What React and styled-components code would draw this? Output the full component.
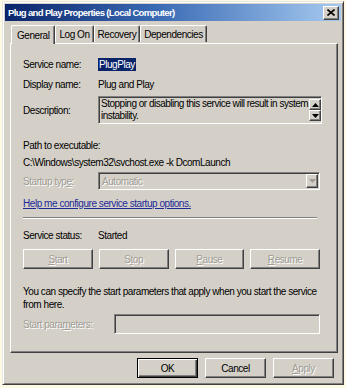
import React from "react";
import styled, { createGlobalStyle } from "styled-components";

const GlobalStyle = createGlobalStyle`
  html, body {
    margin: 0;
    padding: 0;
    background: #fdf9e4;
  }
  body {
    font-family: "Liberation Sans", Arial, sans-serif;
    font-size: 10px;
    letter-spacing: -0.45px;
    color: #000;
  }
`;

const Window = styled.div`
  box-sizing: border-box;
  width: 342px;
  height: 384px;
  margin: 1px 0 0 2px;
  background: #d4d0c8;
  border: 1px solid;
  border-color: #e8e6e0 #404040 #404040 #e8e6e0;
  box-shadow: inset 1px 1px 0 #fff, inset -1px -1px 0 #808080;
  padding: 2px;
  display: flex;
  flex-direction: column;
`;

const TitleBar = styled.div`
  height: 17px;
  display: flex;
  align-items: center;
  justify-content: space-between;
  padding: 0 2px 0 3px;
  background: linear-gradient(to right, #0a246a 0%, #3a6ab4 45%, #a6caf0 100%);
`;

const Title = styled.span`
  color: #fff;
  font-weight: bold;
  font-size: 9.5px;
  letter-spacing: -0.65px;
`;

const CloseButton = styled.div`
  box-sizing: border-box;
  width: 16px;
  height: 14px;
  background: #d4d0c8;
  border: 1px solid;
  border-color: #fff #404040 #404040 #fff;
  box-shadow: inset -1px -1px 0 #808080;
  display: flex;
  align-items: center;
  justify-content: center;
`;

const Body = styled.div`
  flex: 1;
  display: flex;
  flex-direction: column;
  padding: 3px 5px 0 5px;
`;

const TabRow = styled.div`
  display: flex;
  align-items: flex-end;
  height: 19px;
  padding-left: 1px;
  position: relative;
  z-index: 1;
`;

const Tab = styled.div`
  box-sizing: border-box;
  height: ${({ active }) => (active ? "19px" : "17px")};
  padding: 0 ${({ active }) => (active ? "5px" : "3px")};
  margin: ${({ active }) => (active ? "0 0 -1px" : "0 0 1px")};
  display: flex;
  align-items: center;
  background: #d4d0c8;
  border-top: 1px solid #fff;
  border-left: 1px solid #fff;
  border-right: 1px solid #404040;
  box-shadow: inset -1px 0 0 #808080;
  border-radius: 2px 2px 0 0;
`;

const Panel = styled.div`
  box-sizing: border-box;
  width: 328px;
  height: 310px;
  border: 1px solid;
  border-color: #fff #404040 #404040 #fff;
  box-shadow: inset -1px -1px 0 #808080;
  padding: 7px 17px 0 12px;
  display: flex;
  flex-direction: column;
`;

const Row = styled.div`
  display: flex;
  align-items: ${({ top }) => (top ? "flex-start" : "center")};
  min-height: ${({ h }) => h || 14}px;
  margin-top: ${({ mt }) => mt || 0}px;
`;

const Label = styled.div`
  width: ${({ w }) => w || 75}px;
  flex-shrink: 0;
  color: ${({ disabled }) => (disabled ? "#a09c94" : "#000")};
  text-shadow: ${({ disabled }) => (disabled ? "1px 1px 0 #fff" : "none")};
  padding-top: ${({ pt }) => pt || 0}px;
`;

const Selected = styled.span`
  background: #0a246a;
  color: #fff;
  padding: 1px 1px;
  outline: 1px dotted #d4d0c8;
`;

const Sunken = styled.div`
  box-sizing: border-box;
  width: ${({ w }) => w}px;
  height: ${({ h }) => h}px;
  border: 1px solid;
  border-color: #808080 #fff #fff #808080;
  box-shadow: inset 1px 1px 0 #404040, inset -1px -1px 0 #d4d0c8;
  background: #d4d0c8;
  display: flex;
`;

const DescText = styled.div`
  flex: 1;
  padding: 1px 1px 1px 2px;
  line-height: 12px;
  letter-spacing: -0.5px;
  white-space: nowrap;
`;

const ComboText = styled.div`
  flex: 1;
  padding: 0 3px;
  display: flex;
  align-items: center;
  color: #a09c94;
  text-shadow: 1px 1px 0 #fff;
`;

const ScrollCol = styled.div`
  display: flex;
  flex-direction: column;
  justify-content: space-between;
  padding: 2px 1px 2px 0;
`;

const ArrowBtn = styled.div`
  box-sizing: border-box;
  width: 12px;
  height: ${({ h }) => h || 12}px;
  background: #d4d0c8;
  border: 1px solid;
  border-color: #fff #404040 #404040 #fff;
  box-shadow: inset -1px -1px 0 #808080;
  display: flex;
  align-items: center;
  justify-content: center;
  margin: ${({ m }) => m || 0};
`;

const Tri = ({ up, color = "#000" }) => (
  <svg width="7" height="4" viewBox="0 0 7 4">
    <polygon points={up ? "3.5,0 7,4 0,4" : "0,0 7,0 3.5,4"} fill={color} />
  </svg>
);

const Text = styled.div`
  margin-top: ${({ mt }) => mt || 0}px;
  line-height: ${({ lh }) => lh || 14}px;
  white-space: nowrap;
`;

const Link = styled.a`
  color: #1c2a96;
  text-decoration: underline;
  cursor: pointer;
  margin-top: ${({ mt }) => mt || 0}px;
  line-height: 14px;
`;

const Separator = styled.div`
  height: 0;
  width: 294px;
  border-top: 1px solid #808080;
  border-bottom: 1px solid #fff;
  margin-top: 6px;
`;

const ButtonGrid = styled.div`
  display: grid;
  grid-template-columns: repeat(4, 1fr);
  gap: 6px;
  width: 297px;
  margin-top: 7px;
`;

const Button = styled.div`
  box-sizing: border-box;
  height: 20px;
  width: ${({ w }) => (w ? `${w}px` : "auto")};
  display: flex;
  align-items: center;
  justify-content: center;
  background: #d4d0c8;
  border: 1px solid;
  border-color: ${({ def }) =>
    def ? "#000" : "#fff #404040 #404040 #fff"};
  box-shadow: ${({ def }) =>
    def
      ? "inset 1px 1px 0 #fff, inset -1px -1px 0 #404040, inset -2px -2px 0 #808080"
      : "inset -1px -1px 0 #808080"};
  color: ${({ disabled }) => (disabled ? "#a09c94" : "#000")};
  text-shadow: ${({ disabled }) => (disabled ? "1px 1px 0 #fff" : "none")};
`;

const U = styled.span`
  text-decoration: underline;
`;

const Footer = styled.div`
  display: flex;
  justify-content: flex-end;
  gap: 7px;
  padding-right: 2px;
  margin-top: 5px;
`;

export default function App() {
  return (
    <>
      <GlobalStyle />
      <Window>
        <TitleBar>
          <Title>Plug and Play Properties (Local Computer)</Title>
          <CloseButton>
            <svg width="8" height="7" viewBox="0 0 8 7">
              <path d="M0.5 0.5 L7.5 6.5 M7.5 0.5 L0.5 6.5" stroke="#000" strokeWidth="1.6" />
            </svg>
          </CloseButton>
        </TitleBar>
        <Body>
          <TabRow>
            <Tab active>General</Tab>
            <Tab>Log On</Tab>
            <Tab>Recovery</Tab>
            <Tab>Dependencies</Tab>
          </TabRow>
          <Panel>
            <Row h={14} mt={6}>
              <Label>Service name:</Label>
              <Selected>PlugPlay</Selected>
            </Row>
            <Row h={14} mt={6}>
              <Label>Display name:</Label>
              <span>Plug and Play</span>
            </Row>
            <Row top mt={5}>
              <Label pt={9}>Description:</Label>
              <Sunken w={224} h={28}>
                <DescText>
                  Stopping or disabling this service will result in system
                  <br />
                  instability.
                </DescText>
                <ScrollCol>
                  <ArrowBtn h={12}><Tri up /></ArrowBtn>
                  <ArrowBtn h={12}><Tri /></ArrowBtn>
                </ScrollCol>
              </Sunken>
            </Row>
            <Text mt={15}>Path to executable:</Text>
            <Text mt={3}>C:\Windows\system32\svchost.exe -k DcomLaunch</Text>
            <Row mt={2}>
              <Label disabled>
                Startup typ<U>e</U>:
              </Label>
              <Sunken w={224} h={18}>
                <ComboText>Automatic</ComboText>
                <ArrowBtn h={14} m="1px 1px 0 0">
                  <Tri color="#a09c94" />
                </ArrowBtn>
              </Sunken>
            </Row>
            <Link mt={7}>Help me configure service startup options.</Link>
            <Separator />
            <Row mt={9}>
              <Label>Service status:</Label>
              <span>Started</span>
            </Row>
            <ButtonGrid>
              <Button disabled><U>S</U>tart</Button>
              <Button disabled>S<U>t</U>op</Button>
              <Button disabled><U>P</U>ause</Button>
              <Button disabled><U>R</U>esume</Button>
            </ButtonGrid>
            <Text mt={16} lh={13}>
              You can specify the start parameters that apply when you start the service
              <br />
              from here.
            </Text>
            <Row mt={3}>
              <Label w={91} disabled>
                Start para<U>m</U>eters:
              </Label>
              <Sunken w={207} h={20} />
            </Row>
          </Panel>
          <Footer>
            <Button w={61} def>OK</Button>
            <Button w={61}>Cancel</Button>
            <Button w={61} disabled><U>A</U>pply</Button>
          </Footer>
        </Body>
      </Window>
    </>
  );
}
